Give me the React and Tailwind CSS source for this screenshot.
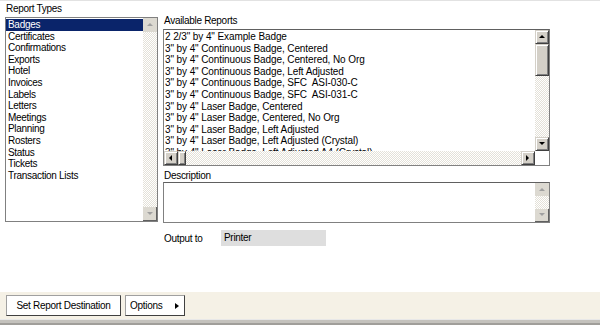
const reportTypes = [
  "Badges",
  "Certificates",
  "Confirmations",
  "Exports",
  "Hotel",
  "Invoices",
  "Labels",
  "Letters",
  "Meetings",
  "Planning",
  "Rosters",
  "Status",
  "Tickets",
  "Transaction Lists",
];

const reports = [
  '2 2/3" by 4" Example Badge',
  '3" by 4" Continuous Badge, Centered',
  '3" by 4" Continuous Badge, Centered, No Org',
  '3" by 4" Continuous Badge, Left Adjusted',
  '3" by 4" Continuous Badge, SFC  ASI-030-C',
  '3" by 4" Continuous Badge, SFC  ASI-031-C',
  '3" by 4" Laser Badge, Centered',
  '3" by 4" Laser Badge, Centered, No Org',
  '3" by 4" Laser Badge, Left Adjusted',
  '3" by 4" Laser Badge, Left Adjusted (Crystal)',
  '3" by 4" Laser Badge, Left Adjusted A4 (Crystal)',
];

const track =
  "bg-[repeating-conic-gradient(#ffffff_0_25%,#e4e1d8_0_50%)] bg-[length:2px_2px]";

const bevel =
  "bg-[#d4d0c8] border border-t-[#d4d0c8] border-l-[#d4d0c8] border-b-[#404040] border-r-[#404040] shadow-[inset_1px_1px_#ffffff,inset_-1px_-1px_#808080]";

function Arrow({ dir, disabled }) {
  const fill = disabled ? "#a0a0a0" : "#000000";
  const pts = {
    up: "1,5 4,2 7,5",
    down: "1,2 4,5 7,2",
    left: "5,1 2,4 5,7",
    right: "2,1 5,4 2,7",
  }[dir];
  return (
    <svg width="8" height="8" viewBox="0 0 8 8">
      <polygon points={pts} fill={fill} />
    </svg>
  );
}

function ScrollBtn({ dir, disabled }) {
  return (
    <div className={`${bevel} w-[14px] h-[14px] shrink-0 flex items-center justify-center`}>
      <Arrow dir={dir} disabled={disabled} />
    </div>
  );
}

function FlatBtn({ dir, h = "h-[14px]", edge }) {
  return (
    <div
      className={`w-[14px] ${h} bg-[#dcd9d1] flex items-center justify-center ${
        edge ? "border-r border-b border-[#606060]" : ""
      }`}
    >
      <Arrow dir={dir} disabled />
    </div>
  );
}

export default function App() {
  return (
    <div className="w-[600px] h-[325px] bg-white flex flex-col border-t border-[#e2e2e2] font-['Liberation_Sans',Arial,sans-serif] text-[10px] tracking-[-0.3px] text-black overflow-hidden">
      <div className="flex flex-1 pl-[5px] gap-[5px]">
        {/* Report types */}
        <div className="flex flex-col w-[153px]">
          <div className="h-[16px] pl-[1px] pt-[2px] leading-[12px]">Report Types</div>
          <div className="h-[205px] border border-[#808080] flex">
            <div className="flex-1 leading-[11.6px] pt-[1px]">
              {reportTypes.map((t, i) => (
                <div
                  key={t}
                  className={`pl-[2px] h-[11.6px] ${i === 0 ? "bg-[#0a246a] text-white" : ""}`}
                >
                  {t}
                </div>
              ))}
            </div>
            <div className={`w-[14px] flex flex-col ${track}`}>
              <FlatBtn dir="up" />
              <div className="flex-1" />
              <FlatBtn dir="down" edge />
            </div>
          </div>
        </div>

        {/* Reports */}
        <div className="flex flex-col w-[387px] pt-[13px]">
          <div className="h-[15px] pl-[1px] pt-[1px] leading-[12px]">Available Reports</div>
          <div className="h-[137px] border border-[#808080] border-t-[#606060] flex flex-col">
            <div className="flex flex-1 min-h-0">
              <div className="flex-1 overflow-hidden leading-[11.6px] pl-[1px] pt-[1px] tracking-[-0.1px]">
                {reports.map((r) => (
                  <div key={r} className="h-[11.6px] whitespace-pre">
                    {r}
                  </div>
                ))}
              </div>
              <div className={`w-[14px] flex flex-col ${track}`}>
                <ScrollBtn dir="up" />
                <div className={`${bevel} h-[32px]`} />
                <div className="flex-1" />
                <ScrollBtn dir="down" />
              </div>
            </div>
            <div className={`h-[14px] flex ${track}`}>
              <ScrollBtn dir="left" />
              <div className={`${bevel} w-[8px] h-[14px]`} />
              <div className="flex-1" />
              <ScrollBtn dir="right" />
              <div className="w-[14px] bg-white" />
            </div>
          </div>

          <div className="h-[16px] pl-[1px] pt-[4px] leading-[12px]">Description</div>
          <div className="h-[41px] border border-[#808080] border-t-[#606060] flex">
            <div className="flex-1" />
            <div className={`w-[14px] flex flex-col ${track}`}>
              <FlatBtn dir="up" h="h-[13px]" />
              <div className="flex-1" />
              <FlatBtn dir="down" h="h-[13px]" edge />
            </div>
          </div>

          <div className="flex items-center mt-[7px] h-[16px]">
            <span className="pl-[1px] w-[58px]">Output to</span>
            <div className="w-[105px] h-[16px] bg-[#dedede] pl-[3px] leading-[16px]">Printer</div>
          </div>
        </div>
      </div>

      {/* Bottom bar */}
      <div className="h-[27px] bg-[#f5f1e6] flex items-center pl-[6px] gap-[4px]">
        <div className="w-[115px] h-[21px] bg-white border border-[#a0a0a0] border-r-[#404040] border-b-[#404040] flex items-center justify-center">
          Set Report Destination
        </div>
        <div className="w-[60px] h-[21px] bg-white border border-[#a0a0a0] border-r-[#404040] border-b-[#404040] flex items-center pl-[4px] gap-[12px]">
          <span>Options</span>
          <svg width="6" height="8" viewBox="0 0 6 8">
            <polygon points="1,1 5,4 1,7" fill="#000" />
          </svg>
        </div>
      </div>
      <div className="h-[6px] border-t border-[#e8e8e8] bg-[#c4c2bd] border-b-2 border-b-[#a09e9a]" />
    </div>
  );
}
